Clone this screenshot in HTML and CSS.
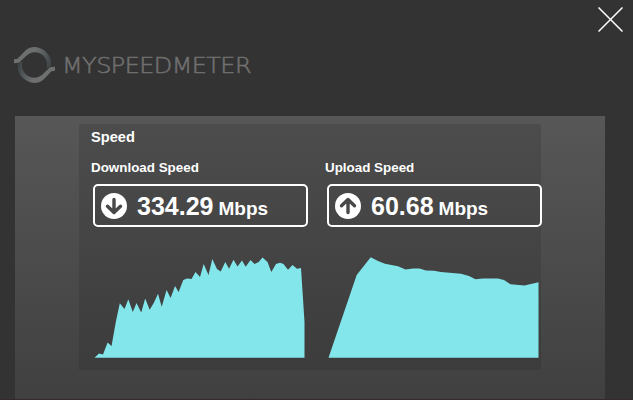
FILE: index.html
```html
<!DOCTYPE html>
<html lang="en">
<head>
    <meta charset="UTF-8">
    <title>MySpeedMeter</title>
    <link rel="stylesheet" href="styles.css">
</head>
<body>
    <div class="page">
        <div class="topbar">
            <button class="close-btn" aria-label="Close">
                <svg width="25" height="25" viewBox="0 0 25 25">
                    <path d="M0.5 0.5L24.5 24.5M24.5 0.5L0.5 24.5" stroke="#fff" stroke-width="1.5"/>
                </svg>
            </button>
        </div>
        <div class="brand">
            <svg class="brand-mark" width="42" height="38" viewBox="0 0 42 38">
                <defs>
                    <linearGradient id="ring" gradientUnits="userSpaceOnUse" x1="8" y1="6" x2="38" y2="20">
                        <stop offset="0.35" stop-color="#6e7070"/>
                        <stop offset="1" stop-color="#384143"/>
                    </linearGradient>
                    <path id="swoosh" d="M0 13.2L3.5 12.8Q9 7 12 4Q15.5 1 20.5 1A17.5 17.5 0 0 1 37.3 20L32.6 22.5A12.7 12.7 0 0 0 20.5 6.2Q15.5 6.2 11 11L5 16.7L0 17.2Z" fill="url(#ring)"/>
                </defs>
                <use href="#swoosh" transform="rotate(180 20.5 19)"/>
                <use href="#swoosh"/>
            </svg>
            <svg class="brand-name" width="190" height="24" viewBox="0 0 190 24">
                <text x="-1" y="19" textLength="189" lengthAdjust="spacingAndGlyphs">MYSPEEDMETER</text>
            </svg>
        </div>
        <div class="results">
            <div class="speed-panel">
                <h3>Speed</h3>
                <div class="speed-row">
                    <div class="speed-col">
                        <div class="speed-title">Download Speed</div>
                        <div class="speed-box">
                            <svg class="arrow-ico" width="26" height="26" viewBox="0 0 26 26">
                                <circle cx="13" cy="13" r="13" fill="#fff"/>
                                <path d="M13 6.5V19.3M6.5 13.2L13 19.5L19.5 13.2" fill="none" stroke="#484848" stroke-width="3.4" stroke-linecap="round" stroke-linejoin="round"/>
                            </svg>
                            <span class="speed-value">334.29</span>
                            <span class="speed-unit">Mbps</span>
                        </div>
                        <svg class="graph" width="214" height="108" viewBox="94 250 214 108">
                            <path d="M94.5 357.7L99 353.5L103 354.5L107.6 342.5L111.5 346L116 321L119.8 303.3L124.5 309L128.3 299.3L132.8 312L136.5 303L141.2 312.5L145.2 298.5L149.7 309.7L154 302.5L158 293.7L161.7 306.7L166.6 290L170.6 298L175 286L178.6 292L183.3 280L187 278.6L191.5 279L195.5 272L200 277L203.7 264L208.5 275L212.3 259L217 269L220.7 271.5L225.3 262L229 268.7L233.5 259.7L237.5 266.5L242 260.5L245.7 266.7L250.5 260L254.5 264L258.7 262L262.5 257.5L267.5 262L271.3 272L276 264L280 262.7L283.5 264L288 269.7L292.5 265L297 268.7L301 268L304.5 322V357.7Z"/>
                        </svg>
                    </div>
                    <div class="speed-col">
                        <div class="speed-title">Upload Speed</div>
                        <div class="speed-box">
                            <svg class="arrow-ico" width="26" height="26" viewBox="0 0 26 26">
                                <circle cx="13" cy="13" r="13" fill="#fff"/>
                                <path d="M13 19.5V6.8M6.5 12.8L13 6.5L19.5 12.8" fill="none" stroke="#484848" stroke-width="3.4" stroke-linecap="round" stroke-linejoin="round"/>
                            </svg>
                            <span class="speed-value">60.68</span>
                            <span class="speed-unit">Mbps</span>
                        </div>
                        <svg class="graph" width="214" height="108" viewBox="328 250 214 108">
                            <path d="M328.5 357.7L356.7 275L370.7 257.3L378 261L385 263.8L398 266.3L405.5 269.5L413 268.4L419.5 268.5L426 270.5L434 270.7L441 272L461 273.8L469 276L475.5 279.2L483 278.6L498 278.5L504 280L510.5 284.3L524.5 285.5L538.5 282.3V357.7Z"/>
                        </svg>
                    </div>
                </div>
            </div>
        </div>
    </div>
</body>
</html>
```
FILE: styles.css
```css
* {
    box-sizing: border-box;
}
body {
    margin: 0;
    background: #333;
    color: #fff;
    font-family: "Liberation Sans", Arial, sans-serif;
}
.page {
    height: 400px;
    overflow: hidden;
    border-bottom: 1px solid #35292e;
}
.topbar {
    display: flex;
    justify-content: flex-end;
    height: 46px;
    padding: 7px 10px 0 0;
}
.close-btn {
    width: 25px;
    height: 25px;
    padding: 0;
    border: none;
    background: none;
    cursor: pointer;
}
.close-btn svg {
    display: block;
}
.brand {
    display: flex;
    align-items: flex-start;
    height: 70px;
    padding-left: 14px;
}
.brand-name {
    margin: 8px 0 0 7px;
    overflow: visible;
    fill: #707070;
    stroke: #707070;
    stroke-width: 0.5px;
    font-family: "DejaVu Sans", sans-serif;
    font-size: 20.5px;
    font-weight: 200;
    letter-spacing: -0.5px;
}
.results {
    width: 590px;
    height: 284px;
    margin-left: 15px;
    padding: 8px 0 0 64px;
    background: linear-gradient(#575757, #404040);
}
.speed-panel {
    width: 462px;
    height: 246px;
    padding: 4px 0 0 12px;
    background: linear-gradient(#4c4c4c, #3c3c3c);
}
h3 {
    margin: 0 0 14px;
    font-size: 14.6px;
    line-height: 18px;
}
.speed-row {
    display: flex;
    gap: 17px;
}
.speed-col {
    width: 217px;
}
.speed-title {
    margin-bottom: 8px;
    font-size: 13.4px;
    font-weight: bold;
    line-height: 16px;
}
.speed-box {
    display: flex;
    align-items: baseline;
    width: 215px;
    height: 43px;
    margin-left: 2px;
    padding: 6px 6px 0;
    border: 2px solid #fff;
    border-radius: 5px;
    font-weight: bold;
    line-height: 28px;
}
.arrow-ico {
    align-self: flex-start;
    margin: 1px 10px 0 0;
}
.speed-value {
    margin-right: 5px;
    font-size: 25px;
}
.speed-unit {
    font-size: 19px;
}
.graph {
    display: block;
    margin: 23px 0 0 3px;
    fill: #83e6eb;
}
```
